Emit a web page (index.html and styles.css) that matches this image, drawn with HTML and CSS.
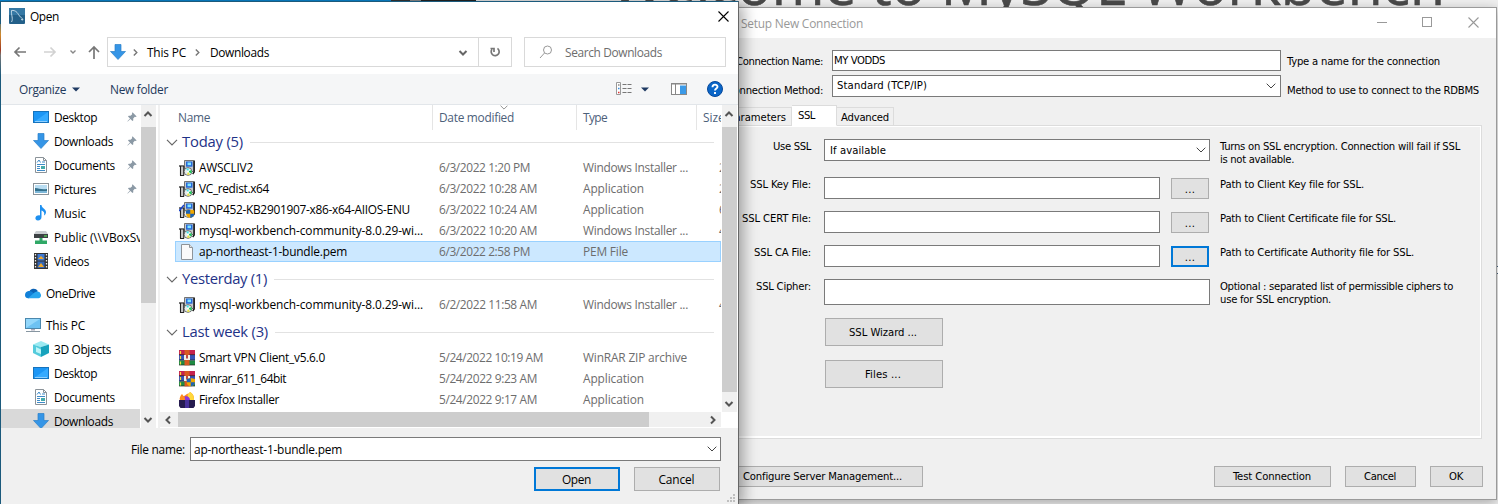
FILE: index.html
```html
<!DOCTYPE html>
<html lang="en">
<head>
<meta charset="utf-8">
<title>MySQL Workbench</title>
<link rel="stylesheet" href="styles.css">
</head>
<body>
<svg class="defs" aria-hidden="true">
  <symbol id="monitor" viewBox="0 0 16 16"><rect x=".5" y="2.5" width="15" height="11" fill="#1c96f5" stroke="#1673bd"/><path d="M1 13 15 3v10z" fill="#35aaff"/><path d="M2 12.5h12" stroke="#8fd0ff"/></symbol>
  <symbol id="down" viewBox="0 0 16 16"><path d="M5 .5h6v7h4.500L8 15.500.5 7.500H5z" fill="#3595e6" stroke="#2a7fc9" stroke-width=".7"/></symbol>
  <symbol id="doc" viewBox="0 0 16 16"><path d="M2.500.5h8l3 3v12h-11z" fill="#fff" stroke="#8b9399"/><path d="M10.500.5v3h3" fill="none" stroke="#8b9399"/><path d="M4 5.500 6 3l1.500 2.500M9 5h3M4 7.500h8M4 9.500h3M4 11.500h3M4 13.500h8" fill="none" stroke="#3f8bc8"/><rect x="8" y="9" width="4" height="3" fill="#4aa"/></symbol>
  <symbol id="picture" viewBox="0 0 16 16"><rect x=".5" y="2.500" width="15" height="11" fill="#fff" stroke="#8b9399"/><path d="M2 4h12v8H2z" fill="#b9ddf2"/><path d="M2 7c4 0 6 2 12 1v2H2z" fill="#33708c"/><path d="M2 10h12v2H2z" fill="#7db7d8"/></symbol>
  <symbol id="music" viewBox="0 0 16 16"><path d="M7 0h1.500c0 3 4.500 4 4.500 7 0 2-1 3-2 3.500C12 7 10 6 8.500 5.500V12c0 2-1.500 3.500-3.500 3.500S2 14 2.500 12.500 5 10 7 10.500z" fill="#1e90f0"/></symbol>
  <symbol id="netdrive" viewBox="0 0 16 16"><path d="M3 2h10l2 3H1z" fill="#c9cdd0"/><path d="M1 5h14v4H1z" fill="#3c4144"/><path d="M11 7h3" stroke="#5dff5d"/><path d="M6.500 9h3v2.500H14V15H2v-3.500h4.500z" fill="#2fa866"/></symbol>
  <symbol id="video" viewBox="0 0 16 16"><path d="M1 0h14v16H1z" fill="#333"/><path d="M2.500 1v14M13.500 1v14" stroke="#eee" stroke-width="1.300" stroke-dasharray="1.500 1.500"/><path d="M4.500 1h7v6.500h-7z" fill="#3f7ad4"/><path d="M4.500 8.500h7V15h-7z" fill="#3467b8"/><path d="M5 6 8 3l3 3zM5 14l3-4 3 4z" fill="#f0a92c"/></symbol>
  <symbol id="cloud" viewBox="0 0 16 16"><path d="M4 7.500a4.800 4.800 0 0 1 8.800-1.500L9 11z" fill="#0b62b5"/><path d="M3.500 6C6 5.500 8 7.500 10 9.500l-6 3.700C1 13.500 0 12 0 10 0 7.800 1.500 6.300 3.500 6z" fill="#1180d8"/><path d="M9.500 7.500c3-2 6-.5 6 1.500 1.200 1 .5 4.200-2 4.200H3z" fill="#28a5ee"/></symbol>
  <symbol id="pc" viewBox="0 0 16 16"><rect x=".5" y="1.500" width="15" height="10" fill="#6dc2f3" stroke="#4c88ad"/><path d="M1 11V2h14z" fill="#93d7fb"/><path d="M6 12h4v1.500H6z" fill="#aab"/><path d="M1 14.500h14" stroke="#8796a1"/></symbol>
  <symbol id="cube" viewBox="0 0 16 16"><path d="M8 0 16 3.500 8 6 0 3.500z" fill="#9beaf2"/><path d="M0 3.500 8 6v10L0 12z" fill="#54cbdc"/><path d="M16 3.500 8 6v10l8-4z" fill="#17a3bd"/><path d="M3 6l5 2.500V13l-5-2z" fill="#bdf5f8"/></symbol>
  <symbol id="pin" viewBox="0 0 10 10"><path d="M5.500.3 9.700 4.500 8.500 5 7.800 4.800 6.200 6.500 6.300 8.300 5.500 9 3.400 7 .8 9.500.4 9.200 3 6.500 1 4.400 1.700 3.700 3.500 3.800 5.200 2.200 5 1.300z" fill="#8b99a5"/></symbol>
  <symbol id="setup" viewBox="0 0 16 16"><path d="M5.500.5h9v11h-9z" fill="#c5c9cd" stroke="#555" stroke-width=".8"/><path d="M7 1.500h6.500v5.200H7z" fill="#2468d8"/><path d="M8.500 2.500h3.500v2.700H8.500z" fill="#7fe6ff"/><path d="M15.200.5V12l-1.500 2" fill="none" stroke="#111" stroke-width="1.400"/><path d="M0 5h5.500v2H0z" fill="#777"/><path d="M1 7h4v8.500H1z" fill="#c9c9c9"/><path d="M1.500 6v9.500M4.800 6v9.500" stroke="#222" stroke-width="1.100"/><path d="M1 15.500h4" stroke="#222"/><circle cx="9" cy="11.500" r="3.900" fill="#e6eded" stroke="#444" stroke-width=".7"/><path d="M9 11.500 12.500 10v3.500z" fill="#15cf55"/><path d="M9 11.500 7 8.500h3z" fill="#3ddfea"/><path d="M9 11.500 8 14.800h3z" fill="#e9e13b"/><circle cx="9" cy="11.500" r="1" fill="#fff"/></symbol>
  <symbol id="shield" viewBox="0 0 8 8"><path d="M4 0 8 1v3c0 2-2 3.500-4 4-2-.5-4-2-4-4V1z" fill="#f2a900"/><path d="M4 0v4H0V1zM4 4h4c0 2-2 3.500-4 4z" fill="#1c63b7"/></symbol>
  <symbol id="setupshield" viewBox="0 0 16 16"><use href="#setup" width="16" height="16"/><path d="M0 9 5 3" stroke="#1b43c9" stroke-width="1.500"/><use href="#shield" x="7" y="7.500" width="8.500" height="8.500"/></symbol>
  <symbol id="file" viewBox="0 0 16 16"><path d="M2.500.5h8l3 3v12h-11z" fill="#fafafa" stroke="#8e9499"/><path d="M10.500.5v3h3" fill="#e3e3e3" stroke="#8e9499"/></symbol>
  <symbol id="rar" viewBox="0 0 16 16"><path d="M0 0h16v5H0z" fill="#c5224f"/><path d="M0 5h16v5.500H0z" fill="#3552b8"/><path d="M0 10.500h16V15H0z" fill="#1f8a43"/><path d="M0 4.700h16M0 10h16M0 15h16" stroke="#222" stroke-width=".7"/><path d="M1.500 1v3M1.500 6v3M1.500 11.500v3" stroke="#f5d93a" stroke-width="1.200"/><path d="M5.500 0h5v15.300h-5z" fill="#d75a21"/><path d="M5 5h6v5H5z" fill="#f2efe6"/><path d="M8 5v3.500" stroke="#a11" stroke-width="1.500"/></symbol>
  <symbol id="rarshield" viewBox="0 0 16 16"><use href="#rar" width="16" height="16"/><use href="#shield" x="7.500" y="7" width="8.500" height="8.500"/></symbol>
  <symbol id="firefox" viewBox="0 0 16 16"><path d="M1 8.500C0 6 1.500 3.500 3 2l1.500 2C6.500 4 7 1.500 10 1.500L11 0c3 1.500 4.500 4.500 4 8.500z" fill="#ff8a1e"/><path d="M8.500 3 11 0c3.500 2 4 5 4 8.500h-5z" fill="#ffd83b"/><path d="M5.500 4.500c3-1 5 .5 5.500 3V10H6.500z" fill="#8c37d8"/><path d="M0 8h16v6l-1.500 2h-13L0 14z" fill="#251b4f"/><path d="M6 8h4v8H6z" fill="#46309a"/></symbol>
  <symbol id="chev" viewBox="0 0 10 6"><path d="M.7.7 5 5 9.300.7" fill="none" stroke="currentColor"/></symbol>
  <symbol id="thick" viewBox="0 0 10 6"><path d="M1.500 1 5 4.500 8.500 1" fill="none" stroke="currentColor" stroke-width="2"/></symbol>
  <symbol id="close" viewBox="0 0 11 11"><path d="M.5.5l10 10M10.500.5l-10 10" fill="none" stroke="currentColor" stroke-width="1.100"/></symbol>
</svg>

<div class="desktop">
  <div class="taskbar-strip"><i class="blue"></i><i class="dark"></i></div>
  <div class="headline"><span data-w="834">Welcome to MySQL Workbench</span></div>
  <i class="edge-mark"></i>

  <section class="setup">
    <header class="setup-title"><span data-w="122">Setup New Connection</span>
      <div class="controls">
        <svg width="10" height="11"><path d="M0 5.500h10" stroke="#999"/></svg>
        <svg width="11" height="11"><rect x=".5" y=".5" width="9" height="9" fill="none" stroke="#999"/></svg>
        <svg width="11" height="11"><use href="#close"/></svg>
      </div>
    </header>
    <div class="head-row"><label><span data-w="87">Connection Name:</span></label><div class="field name"><span data-w="51">MY VODDS</span></div><p><span data-w="153">Type a name for the connection</span></p></div>
    <div class="head-row method"><label><span data-w="96">Connection Method:</span></label><div class="field combo"><span data-w="90">Standard (TCP/IP)</span><svg width="10" height="6"><use href="#chev"/></svg></div><p><span data-w="192">Method to use to connect to the RDBMS</span></p></div>
    <nav class="tabs"><div class="tab first"><span data-w="57">Parameters</span></div><div class="tab active"><span data-w="17">SSL</span></div><div class="tab"><span data-w="48">Advanced</span></div></nav>
    <div class="panel">
      <div class="row r38"><label><span data-w="38">Use SSL</span></label><div class="field combo"><span data-w="56">If available</span><svg width="10" height="6"><use href="#chev"/></svg></div><p><span data-w="240">Turns on SSL encryption. Connection will fail if SSL</span><br><span data-w="74">is not available.</span></p></div>
      <div class="row"><label><span data-w="61">SSL Key File:</span></label><div class="pick"><div class="field"></div><button>...</button></div><p><span data-w="144">Path to Client Key file for SSL.</span></p></div>
      <div class="row"><label><span data-w="69">SSL CERT File:</span></label><div class="pick"><div class="field"></div><button>...</button></div><p><span data-w="176">Path to Client Certificate file for SSL.</span></p></div>
      <div class="row"><label><span data-w="57">SSL CA File:</span></label><div class="pick"><div class="field"></div><button class="focus">...</button></div><p><span data-w="194">Path to Certificate Authority file for SSL.</span></p></div>
      <div class="row r39"><label><span data-w="55">SSL Cipher:</span></label><div class="field tall"></div><p><span data-w="233">Optional : separated list of permissible ciphers to</span><br><span data-w="111">use for SSL encryption.</span></p></div>
      <div class="actions"><button><span data-w="68">SSL Wizard ...</span></button><button><span data-w="36">Files ...</span></button></div>
    </div>
    <footer class="setup-foot"><button class="conf"><span data-w="159">Configure Server Management...</span></button><button class="test"><span data-w="78">Test Connection</span></button><button class="cancel"><span data-w="32">Cancel</span></button><button class="ok"><span data-w="14">OK</span></button></footer>
  </section>

  <section class="open">
    <header class="open-title">
      <svg width="16" height="16"><rect width="16" height="16" rx="1" fill="#236089"/><path d="M0 0h16v7H0z" fill="#3578a4"/><path d="M2.500 14C4.500 11 2 7 2.500 2.500c4-.5 6 2 7.500 5 2 2 3 2 4 4.500l-2-.5" fill="none" stroke="#cfe2ee" stroke-width=".9"/></svg>
      <span data-w="29">Open</span>
      <svg class="x" width="11" height="11"><use href="#close"/></svg>
    </header>
    <div class="navbar">
      <svg class="arrows" width="90" height="16"><g fill="none" stroke-width="1.700"><path d="M13 8H2M6.500 3.500 2 8l4.500 4.500" stroke="#777"/><path d="M31 8h11M37.500 3.500 42 8l-4.500 4.500" stroke="#d2d2d2"/><path d="M57.500 6.500 60 9l2.500-2.500" stroke="#888" stroke-width="1.400"/><path d="M81 15V3M76 8l5-5 5 5" stroke="#777"/></g></svg>
      <div class="address">
        <svg width="16" height="16"><use href="#down"/></svg>
        <svg class="sep" width="5" height="7"><path d="M.8.5 3.800 3.500.8 6.500" fill="none" stroke="#777" stroke-width="1.400"/></svg>
        <span data-w="39">This PC</span>
        <svg class="sep" width="5" height="7"><path d="M.8.5 3.800 3.500.8 6.500" fill="none" stroke="#777" stroke-width="1.400"/></svg>
        <span data-w="59">Downloads</span>
        <svg class="drop" width="10" height="6"><use href="#thick"/></svg>
      </div>
      <div class="refresh"><svg width="12" height="12"><path d="M8.500 2.400A4 4 0 1 1 3 3.200M1.500 2.500H5V6" fill="none" stroke="#777" stroke-width="1.700"/></svg></div>
      <div class="search"><svg width="14" height="14"><circle cx="8.500" cy="5" r="4" fill="none" stroke="#999"/><path d="M5.500 8 1 13" stroke="#999"/></svg><span data-w="97">Search Downloads</span></div>
    </div>
    <div class="toolbar">
      <span data-w="47">Organize</span><svg width="8" height="5"><path d="M0 .5h8L4 4.500z" fill="#1f3a63"/></svg>
      <span class="newf" data-w="58">New folder</span>
      <svg class="view" width="16" height="14"><path d="M.5.5h4v12h-4z" fill="#fff" stroke="#999"/><path d="M2 3h1.500" stroke="#888" stroke-width="1.500"/><path d="M2 6.500h1.500" stroke="#3a8ee0" stroke-width="1.500"/><path d="M2 10.500h1.500" stroke="#d33" stroke-width="1.500"/><path d="M6.500 2.500h10M6.500 6.500h10M6.500 10.500h10" stroke="#777" stroke-dasharray="4 1"/></svg>
      <svg class="tri" width="8" height="5"><path d="M0 .5h8L4 4.500z" fill="#1f3a63"/></svg>
      <svg class="pane" width="16" height="12"><rect x=".5" y=".5" width="15" height="11" fill="#fff" stroke="#888"/><path d="M0 1h16M4.500 1v11" stroke="#888"/><path d="M9 2.500h6v8.500H9z" fill="#3b9ae8"/></svg>
      <svg class="help" width="16" height="16"><circle cx="8" cy="8" r="7.500" fill="#0a66c8" stroke="#07489a"/><path d="M5.500 6.200c0-3.400 5-3.200 5-.4C10.500 7.500 8 7.700 8 9.600M8 11v2" fill="none" stroke="#fff" stroke-width="1.900"/></svg>
    </div>
    <div class="body">
      <aside>
        <div class="tree">
          <div class="item"><svg><use href="#monitor"/></svg><span data-w="43">Desktop</span><svg class="pin"><use href="#pin"/></svg></div>
          <div class="item"><svg><use href="#down"/></svg><span data-w="59">Downloads</span><svg class="pin"><use href="#pin"/></svg></div>
          <div class="item"><svg><use href="#doc"/></svg><span data-w="61">Documents</span><svg class="pin"><use href="#pin"/></svg></div>
          <div class="item"><svg><use href="#picture"/></svg><span data-w="42">Pictures</span><svg class="pin"><use href="#pin"/></svg></div>
          <div class="item"><svg><use href="#music"/></svg><span data-w="32">Music</span></div>
          <div class="item"><svg><use href="#netdrive"/></svg><span data-w="88">Public (\\VBoxSv</span></div>
          <div class="item"><svg><use href="#video"/></svg><span data-w="35">Videos</span></div>
          <div class="item top"><svg><use href="#cloud"/></svg><span data-w="49">OneDrive</span></div>
          <div class="item top"><svg><use href="#pc"/></svg><span data-w="39">This PC</span></div>
          <div class="item"><svg><use href="#cube"/></svg><span data-w="57">3D Objects</span></div>
          <div class="item"><svg><use href="#monitor"/></svg><span data-w="43">Desktop</span></div>
          <div class="item"><svg><use href="#doc"/></svg><span data-w="61">Documents</span></div>
          <div class="item sel"><svg><use href="#down"/></svg><span data-w="59">Downloads</span></div>
        </div>
        <div class="vbar side"><svg class="up" width="10" height="6"><use href="#thick"/></svg><i></i><svg width="10" height="6"><use href="#thick"/></svg></div>
      </aside>
      <main>
        <div class="listwrap">
          <div class="list">
            <div class="cols"><div class="c1"><span data-w="32">Name</span></div><div class="c2"><span data-w="75">Date modified</span><svg class="sort" width="8" height="5" viewBox="0 0 10 6"><use href="#chev"/></svg></div><div class="c3"><span data-w="24">Type</span></div><div class="c4">Size</div></div>
            <div class="group g1"><svg width="12" height="7"><use href="#chev"/></svg><span data-w="61">Today (5)</span><hr></div>
            <div class="file"><svg><use href="#setup"/></svg><b><span data-w="54">AWSCLIV2</span></b><em><span data-w="91">6/3/2022 1:20 PM</span></em><em><span data-w="105">Windows Installer ...</span></em><s>2</s></div>
            <div class="file"><svg><use href="#setup"/></svg><b><span data-w="70">VC_redist.x64</span></b><em><span data-w="98">6/3/2022 10:28 AM</span></em><em><span data-w="61">Application</span></em><s>2</s></div>
            <div class="file"><svg><use href="#setupshield"/></svg><b><span data-w="211">NDP452-KB2901907-x86-x64-AIIOS-ENU</span></b><em><span data-w="98">6/3/2022 10:24 AM</span></em><em><span data-w="61">Application</span></em><s>6</s></div>
            <div class="file"><svg><use href="#setup"/></svg><b><span data-w="224">mysql-workbench-community-8.0.29-wi...</span></b><em><span data-w="98">6/3/2022 10:20 AM</span></em><em><span data-w="105">Windows Installer ...</span></em><s>4</s></div>
            <div class="file picked"><svg><use href="#file"/></svg><b><span data-w="148">ap-northeast-1-bundle.pem</span></b><em><span data-w="91">6/3/2022 2:58 PM</span></em><em><span data-w="45">PEM File</span></em></div>
            <div class="group"><svg width="12" height="7"><use href="#chev"/></svg><span data-w="85">Yesterday (1)</span><hr></div>
            <div class="file"><svg><use href="#setup"/></svg><b><span data-w="224">mysql-workbench-community-8.0.29-wi...</span></b><em><span data-w="98">6/2/2022 11:58 AM</span></em><em><span data-w="105">Windows Installer ...</span></em><s>4</s></div>
            <div class="group"><svg width="12" height="7"><use href="#chev"/></svg><span data-w="86">Last week (3)</span><hr></div>
            <div class="file"><svg><use href="#rar"/></svg><b><span data-w="126">Smart VPN Client_v5.6.0</span></b><em><span data-w="104">5/24/2022 10:19 AM</span></em><em><span data-w="104">WinRAR ZIP archive</span></em></div>
            <div class="file"><svg><use href="#rarshield"/></svg><b><span data-w="87">winrar_611_64bit</span></b><em><span data-w="98">5/24/2022 9:23 AM</span></em><em><span data-w="61">Application</span></em></div>
            <div class="file"><svg><use href="#firefox"/></svg><b><span data-w="80">Firefox Installer</span></b><em><span data-w="98">5/24/2022 9:17 AM</span></em><em><span data-w="61">Application</span></em></div>
          </div>
          <div class="vbar main"><svg class="up" width="10" height="6"><use href="#thick"/></svg><i></i><svg width="10" height="6"><use href="#thick"/></svg></div>
        </div>
        <div class="hbar"><svg class="left" width="10" height="6"><use href="#thick"/></svg><i></i><svg class="right" width="10" height="6"><use href="#thick"/></svg></div>
      </main>
    </div>
    <footer class="open-foot">
      <div class="fname"><label><span data-w="54">File name:</span></label><div class="field combo"><span data-w="148">ap-northeast-1-bundle.pem</span><svg width="10" height="6"><use href="#chev"/></svg></div></div>
      <div class="btns"><button class="focus"><span data-w="29">Open</span></button><button><span data-w="36">Cancel</span></button></div>
      <svg class="grip" width="9" height="9"><path d="M6 0h2v2H6zM3 3h2v2H3zM6 3h2v2H6zM0 6h2v2H0zM3 6h2v2H3zM6 6h2v2H6z" fill="#bfbfbf"/></svg>
    </footer>
  </section>
  <i class="edge-left"></i>
</div>
<script src="fit.js"></script>
</body>
</html>
```
FILE: styles.css
```css
* { box-sizing: border-box; }
body { margin: 0; overflow: hidden; font: 11.9px/16px "Open Sans", "Noto Sans", sans-serif; color: #000; }
p { margin: 0; }
span { white-space: nowrap; }
svg { flex: none; display: block; }
button { font: inherit; color: #000; padding: 0; background: #e1e1e1; border: 1px solid #adadad; border-radius: 0; }
button.focus { border: 2px solid #0078d7; }
.defs { position: absolute; width: 0; height: 0; }
.desktop { position: relative; width: 1498px; height: 504px; overflow: hidden; background: #f0f0f0; }
.field { background: #fff; border: 1px solid #7a7a7a; display: flex; align-items: center; justify-content: space-between; }
.field svg { color: #444; }

.taskbar-strip { display: flex; width: 738px; height: 504px; background: #e4e4e4; }
.taskbar-strip .blue { width: 391px; background: #0a84cf; }
.taskbar-strip .dark { width: 85px; background: linear-gradient(90deg, #333 22%, #888 22% 35%, #222 35%); }
.headline { position: absolute; left: 611px; top: -57px; height: 80px; font-size: 57px; line-height: 80px; color: #4a4a4a; -webkit-text-stroke: .6px #4a4a4a; }
.edge-mark { position: absolute; left: 1493px; top: 266px; width: 8px; height: 8px; border: 1px solid #4a6580; background: #fff; }
.edge-left { position: absolute; left: 0; top: 24px; width: 1px; height: 52px; background: linear-gradient(#6a7a70, #d08a2c 20%, #a03a22 50%, #777 60%, #1b5a7c); }

/* Setup window */
.setup { position: absolute; left: 700px; top: 7px; width: 797px; height: 493px; background: #f0f0f0; border: 1px solid #9a9a9a; box-shadow: 0 3px 12px rgba(0,0,0,.3); font: 11.2px/13px "DejaVu Sans Condensed", "DejaVu Sans", sans-serif; }
.setup-title { height: 30px; background: #fff; display: flex; align-items: center; justify-content: space-between; padding: 0 17px 0 40px; color: #999; font: 11.9px/16px "Open Sans", sans-serif; }
.setup-title > span { margin-top: -1px; }
.controls { display: flex; gap: 35px; margin-top: -2px; }
.head-row { display: grid; grid-template-columns: 122px 449px 1fr; column-gap: 9px; padding-top: 12px; }
.head-row p { margin-left: -3px; padding-top: 5px; }
.head-row label { text-align: right; padding-top: 5px; }
.head-row .field { height: 21px; padding: 0 4px 1px 1px; }
.head-row.method { height: 27px; padding-top: 4px; }
.head-row.method label { padding-top: 9px; }
.head-row.method p { padding-top: 9px; }
.head-row.method .field { height: 22px; padding-left: 4px; }
.tabs { display: flex; align-items: flex-end; height: 21px; margin: 7px 0 -1px; position: relative; }
.tab { width: 57px; height: 19px; border: 1px solid #dcdcdc; border-left: 0; padding: 3px 0 0 4px; }
.tab.first { width: 91px; padding: 3px 5px 0 0; text-align: right; }
.tab.active { width: 45px; height: 21px; background: #fff; border-bottom-color: #fff; padding: 3px 0 0 6px; }
.panel { width: 781px; height: 314px; border: 1px solid #dcdcdc; border-left: 0; box-shadow: inset -1px -2px #fff, inset 0 1px #fff; padding-top: 13px; }
.row { display: grid; grid-template-columns: 110px 399px 1fr; height: 34px; align-items: start; }
.row.r38 { height: 38px; }
.row.r39 { height: 39px; }
.row label { text-align: right; padding-top: 1px; }
.row p { padding: 1px 0 0 10px; }
.row > .field, .pick { margin-left: 13px; width: 386px; }
.row .field { height: 22px; padding: 0 3px 0 5px; }
.row .field.tall { height: 26px; }
.pick { display: flex; justify-content: space-between; padding-right: 1px; }
.pick .field { width: 336px; }
.pick button { width: 38px; height: 21px; margin-top: 1px; padding-top: 2px; line-height: 13px; letter-spacing: .3px; }
.actions { display: flex; flex-direction: column; gap: 14px; padding-left: 124px; }
.actions button { width: 118px; height: 28px; padding-right: 2px; }
.setup-foot { display: flex; padding: 27px 13px 0 0; }
.setup-foot button { height: 21px; padding-right: 1px; }
.setup-foot .conf { width: 222px; text-align: left; padding-left: 41px; margin-right: auto; }
.test { width: 117px; margin-right: 14px; }
.cancel { width: 71px; margin-right: 14px; }
.ok { width: 53px; }

/* Open dialog */
.open { position: absolute; left: 0; top: 1px; width: 739px; height: 503px; background: #fff; border: solid #1b5a7c; border-width: 1px 1px 0 1px; border-right-color: #666; box-shadow: 4px 3px 14px rgba(0,0,0,.36); display: flex; flex-direction: column; }
.open-title { height: 28px; display: flex; align-items: center; padding: 0 9px 0 8px; }
.open-title span { margin-left: 5px; padding-top: 0; }
.open-title .x { margin-left: auto; }
.navbar { display: flex; align-items: center; margin-top: 7px; height: 30px; padding-left: 12px; }
.navbar span { margin-top: -1px; }
.arrows { margin-right: 4px; }
.address { display: flex; align-items: center; width: 372px; height: 30px; border: 1px solid #d9d9d9; padding-left: 2px; }
.address .sep { margin: 0 9px 0 7px; }
.address span + .sep { margin: 0 10px 0 9px; }
.drop { margin: 2px 10px 0 auto; color: #666; }
.refresh { width: 33px; height: 30px; border: 1px solid #d9d9d9; border-left: 0; display: grid; place-items: center; }
.search { display: flex; align-items: center; width: 202px; height: 30px; margin-left: 12px; padding-left: 14px; border: 1px solid #d9d9d9; color: #6d6d6d; }
.search span { margin-left: 12px; }
.toolbar { display: flex; align-items: center; height: 31px; margin-top: 7px; padding-left: 18px; background: #f5f6f7; border-bottom: 1px solid #e2e6ea; color: #1e395b; }
.toolbar span { margin-top: -1px; }
.toolbar span + svg { margin: 1px 0 0 6px; }
.toolbar .newf { margin-left: 30px; }
.toolbar .view { margin: 0 0 0 auto; }
.toolbar .tri { margin: 1px 0 0 9px; }
.toolbar .pane { margin-left: 22px; }
.toolbar .help { margin: 0 15px 0 20px; }
.body { display: flex; height: 323px; }
aside { display: flex; width: 159px; border-right: 2px solid #f0f0f0; }
.tree { width: 139px; height: 323px; overflow: hidden; }
.item { display: flex; align-items: center; height: 24px; padding-left: 32px; width: 139px; overflow: hidden; }
.item svg { width: 16px; height: 16px; }
.item span { margin: -1px 0 0 5px; }
.item .pin { width: 10px; height: 10px; margin: 0 3px 0 auto; }
.item.top { margin: 8px 0; padding-left: 24px; }
.item.top + .item.top { margin-bottom: 0; }
.item.sel { background: #d9d9d9; }
.vbar { display: flex; flex-direction: column; align-items: center; justify-content: space-between; background: #f0f0f0; color: #555; width: 15px; padding: 6px 0 5px; }
.vbar svg { margin-left: -1px; }
.vbar i { width: 100%; background: #cdcdcd; }
.vbar .up { transform: rotate(180deg); }
.side { margin-left: 1px; }
.side i { height: 176px; margin: 10px 0 auto; }
main { width: 578px; }
.listwrap { display: flex; height: 307px; }
.list { width: 561px; overflow: hidden; }
.cols { display: flex; height: 26px; color: #4c607a; line-height: 25px; }
.cols > div { border-right: 1px solid #e5e5e5; height: 25px; padding-left: 6px; }
.cols .c1 { width: 273px; padding-left: 18px; }
.cols .c2 { width: 144px; position: relative; }
.cols .c3 { width: 120px; }
.cols .c4 { width: 24px; overflow: hidden; border: 0; }
.sort { position: absolute; left: 67px; top: 0; color: #777; }
.group { display: flex; align-items: center; height: 26px; margin-top: 6px; padding: 0 7px 4px 6px; font-size: 14.8px; color: #1e3287; }
.group.g1 { margin-top: 0; }
.group svg { color: #666; }
.group span { margin: -2px 0 0 4px; }
.group hr { flex: 1; margin: 0 0 0 7px; border: 0; height: 1px; background: #e2e2e2; }
.file { display: grid; grid-template-columns: 16px 244px 144px 136px 10px; align-items: center; height: 21px; margin-left: 15px; padding-left: 4px; color: #6d6d6d; }
.file svg { width: 16px; height: 16px; }
.file b, .file em, .file s { font-style: normal; font-weight: 400; text-decoration: none; margin-top: -2px; }
.file b { padding-left: 4px; color: #000; }
.file.picked { background: #cce8ff; box-shadow: inset 0 0 0 1px #99d1ff; }
.vbar.main { margin-left: 1px; }
.main i { height: 265px; margin: 10px 0 auto; }
.hbar { display: flex; align-items: center; justify-content: space-between; width: 561px; height: 15px; background: #f0f0f0; color: #555; padding: 0 3px; }
.hbar i { width: 471px; height: 15px; background: #cdcdcd; margin: 0 auto 0 5px; }
.left { transform: rotate(90deg); }
.right { transform: rotate(-90deg); }
.open-foot { position: relative; flex: 1; background: #f0f0f0; padding: 9px 17px 0 130px; }
.fname { display: flex; align-items: center; gap: 5px; }
.fname .field { width: 531px; height: 24px; padding: 0 3px; }
.fname label { width: 54px; margin-top: -1px; }
.btns { display: flex; justify-content: flex-end; gap: 14px; margin: 6px 1px 0 0; }
.btns button { width: 86px; height: 24px; padding: 0 1px 1px 0; }
.grip { position: absolute; right: 2px; bottom: 1px; }
```
FILE: fit.js
```js
// Sets letter spacing so each label occupies its declared width.
document.querySelectorAll('[data-w]').forEach(function (el) {
  el.style.display = 'inline-block';
  var n = el.textContent.length;
  var natural = el.getBoundingClientRect().width;
  el.style.letterSpacing = ((+el.dataset.w - natural) / n).toFixed(3) + 'px';
});
```
